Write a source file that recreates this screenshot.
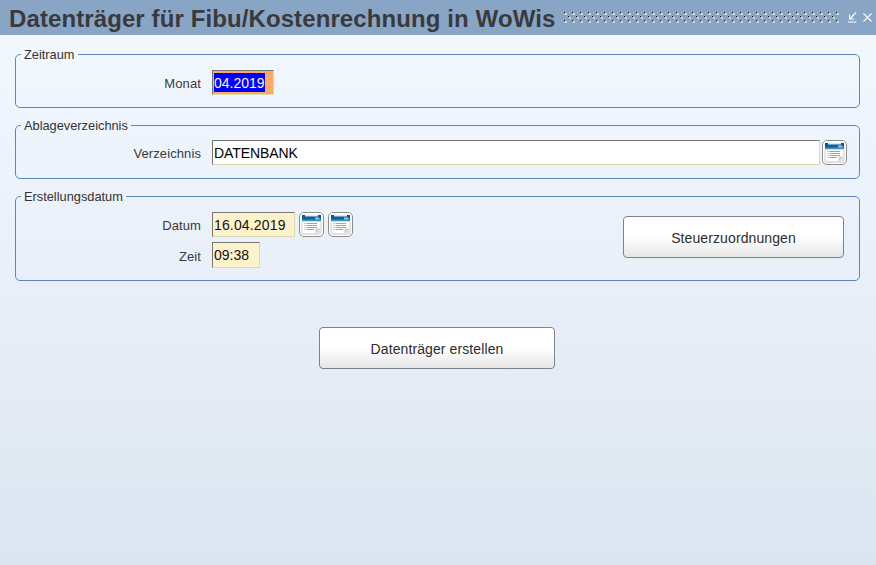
<template>
  <div class="page">
    <header class="titlebar">
      <h1 class="title">Datenträger für Fibu/Kostenrechnung in WoWis</h1>
      <svg class="grip" width="276" height="12" aria-hidden="true">
        <defs>
          <pattern id="grip" width="8" height="8" patternUnits="userSpaceOnUse">
            <rect x="0" y="0" width="1" height="1" fill="#10131a" />
            <rect x="1" y="1" width="2" height="2" fill="#dcdcb4" />
            <rect x="4" y="4" width="1" height="1" fill="#10131a" />
            <rect x="5" y="5" width="2" height="2" fill="#dcdcb4" />
          </pattern>
        </defs>
        <rect width="276" height="12" fill="url(#grip)" />
      </svg>
      <svg class="winbtn min" width="10" height="11" viewBox="0 0 10 11" aria-hidden="true">
        <path d="M9 0.5 L3 6.5 M2.5 2.5 V7 H7 M1 10 H9.5" fill="none" stroke="#fff" stroke-width="1.1" />
      </svg>
      <svg class="winbtn close" width="9" height="9" viewBox="0 0 9 9" aria-hidden="true">
        <path d="M0.5 0.5 L8.5 8.5 M8.5 0.5 L0.5 8.5" fill="none" stroke="#fff" stroke-width="1.1" />
      </svg>
    </header>

    <main class="content">
      <fieldset class="group short">
        <legend>Zeitraum</legend>
        <div class="row pad-8">
          <label class="lbl">Monat</label>
          <div class="input month"><span class="sel">04.2019</span></div>
        </div>
      </fieldset>

      <fieldset class="group short">
        <legend>Ablageverzeichnis</legend>
        <div class="row pad-7">
          <label class="lbl">Verzeichnis</label>
          <div class="input path">DATENBANK</div>
          <button class="cal near" type="button"><svg width="25" height="25" viewBox="0 0 25 25"><use href="#calendar" /></svg></button>
        </div>
      </fieldset>

      <fieldset class="group tall">
        <legend>Erstellungsdatum</legend>
        <div class="split">
          <div class="rows">
            <div class="row">
              <label class="lbl">Datum</label>
              <div class="input date">16.04.2019</div>
              <button class="cal" type="button"><svg width="25" height="25" viewBox="0 0 25 25"><use href="#calendar" /></svg></button>
              <button class="cal" type="button"><svg width="25" height="25" viewBox="0 0 25 25"><use href="#calendar" /></svg></button>
            </div>
            <div class="row">
              <label class="lbl">Zeit</label>
              <div class="input time">09:38</div>
            </div>
          </div>
          <button class="btn small" type="button">Steuerzuordnungen</button>
        </div>
      </fieldset>

      <div class="actions">
        <button class="btn large" type="button">Datenträger erstellen</button>
      </div>
    </main>

    <svg width="0" height="0" class="defs" aria-hidden="true">
      <defs>
        <linearGradient id="calHead" x1="0" y1="0" x2="0" y2="1">
          <stop offset="0" stop-color="#0b4f88" />
          <stop offset="0.55" stop-color="#12609c" />
          <stop offset="1" stop-color="#52b0d8" />
        </linearGradient>
        <linearGradient id="calBg" x1="0" y1="0" x2="0" y2="1">
          <stop offset="0" stop-color="#fbfbfb" />
          <stop offset="1" stop-color="#dedede" />
        </linearGradient>
        <g id="calendar">
          <rect x="0.5" y="0.5" width="24" height="24" rx="4.5" fill="url(#calBg)" stroke="#8c8c8c" />
          <rect x="1.5" y="1.5" width="22" height="22" rx="3.5" fill="none" stroke="#fff" />
          <rect x="3" y="3" width="19" height="6.5" fill="url(#calHead)" />
          <rect x="6" y="3" width="13" height="1.5" fill="#dfe9f1" />
          <rect x="16" y="5.5" width="4.5" height="2" fill="#9cc4de" />
          <path d="M3.5 9.5 H21.5 V16.5 L16.5 21.5 H3.5 Z" fill="#fdfdfd" stroke="#d8d8d8" stroke-width="0.6" />
          <path d="M16.5 21.5 V16.5 H21.5 Z" fill="#cfcfcf" />
          <path d="M7.5 11.5 H18 M7.5 13.5 H18 M7.5 15.5 H18 M7.5 17.5 H15" stroke="#a3a3a3" stroke-width="1" />
          <path d="M5.5 11.5 H6.5 M5.5 13.5 H6.5 M5.5 15.5 H6.5 M5.5 17.5 H6.5" stroke="#a3a3a3" stroke-width="1" />
        </g>
      </defs>
    </svg>
  </div>
</template>

<style>
html, body { margin: 0; padding: 0; }
</style>

<style scoped>
.page {
  width: 876px;
  height: 565px;
  overflow: hidden;
  font-family: "Liberation Sans", Arial, sans-serif;
  background: linear-gradient(180deg, #f3f8ff 35px, #dce5f0 100%);
  color: #333;
}
.titlebar {
  height: 35px;
  background: #88a5c6;
  display: flex;
  align-items: center;
  box-sizing: border-box;
  padding-left: 9px;
}
.title {
  margin: 0;
  padding-top: 3px;
  width: 555px;
  flex: none;
  box-sizing: border-box;
  font-size: 24px;
  font-weight: 700;
  letter-spacing: 0.1px;
  line-height: 32px;
  color: #3a3a3c;
  white-space: nowrap;
}
.grip { flex: none; margin-top: 1px; }
.winbtn { flex: none; }
.min { margin-left: 7px; }
.close { margin-left: 6px; }
.content {
  padding: 11px 16px 0 15px;
}
.group {
  margin: 0 0 9px;
  padding: 0;
  border: 1px solid #5a88bb;
  border-radius: 5px;
  min-width: 0;
  box-sizing: border-box;
}
.group legend {
  margin-left: 5px;
  padding: 2px 3px 0;
  font-size: 12.8px;
  line-height: 14px;
  color: #333;
}
.short { height: 62px; }
.tall { height: 93px; }
.row {
  display: flex;
  align-items: center;
}
.pad-8 { padding-top: 8px; }
.pad-7 { padding-top: 7px; }
.lbl {
  width: 185px;
  flex: none;
  box-sizing: border-box;
  padding-top: 2px;
  text-align: right;
  font-size: 13px;
  letter-spacing: 0.1px;
  color: #3a3a3a;
  margin-right: 11px;
}
.input {
  box-sizing: border-box;
  height: 25px;
  border: 1px solid #d9dab0;
  border-top-color: #777;
  border-left-color: #777;
  font-size: 14px;
  line-height: 25px;
  padding-left: 1px;
  color: #000;
  background: #fff;
  white-space: nowrap;
}
.month {
  width: 62px;
  background: #fbab64;
}
.sel {
  display: inline-block;
  background: #0000ff;
  color: #fff;
  line-height: 17px;
  padding-top: 2px;
}
.path { width: 608px; letter-spacing: -0.1px; }
.date { width: 83px; background: #fef2cc; color: #111; letter-spacing: 0.15px; }
.time { width: 48px; height: 26px; background: #fef2cc; color: #111; }
.cal {
  border: 0;
  padding: 0;
  margin: 0 0 0 4px;
  background: none;
  width: 25px;
  height: 25px;
  display: block;
  flex: none;
}
.cal.near { margin-left: 2px; }
.cal svg { display: block; }
.split {
  display: flex;
  justify-content: space-between;
  align-items: flex-start;
  padding-right: 15px;
}
.rows {
  display: flex;
  flex-direction: column;
  gap: 5px;
  padding-top: 8px;
}
.btn {
  box-sizing: border-box;
  border: 1px solid #7f8387;
  border-radius: 4px;
  background: linear-gradient(180deg, #ffffff 0%, #ffffff 50%, #e6e6e6 100%);
  font-family: inherit;
  font-size: 14px;
  letter-spacing: 0.1px;
  color: #2c2c2c;
  padding: 2px 0 0;
  display: block;
}
.small { width: 221px; height: 42px; margin-top: 12px; }
.large { width: 236px; height: 42px; }
.actions {
  padding: 37px 0 0 304px;
}
.defs { position: absolute; width: 0; height: 0; }
</style>
